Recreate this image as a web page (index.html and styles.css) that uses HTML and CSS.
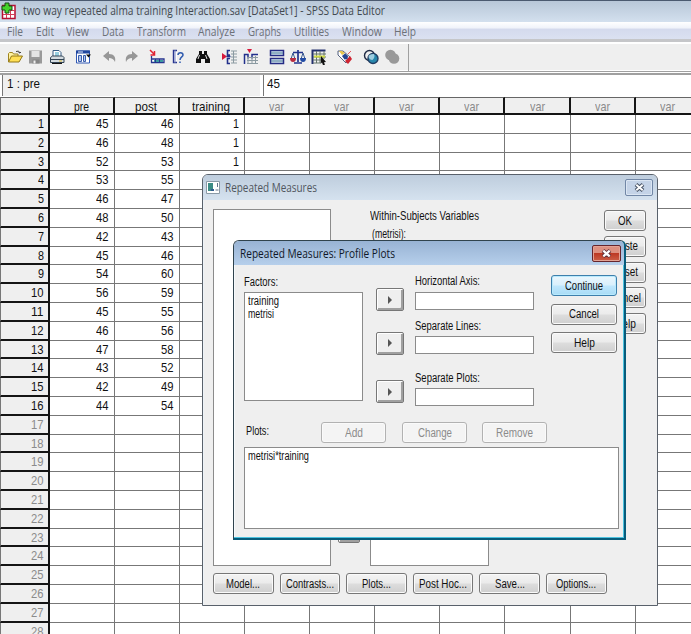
FILE: index.html
```html
<!DOCTYPE html>
<html lang="en">
<head>
<meta charset="utf-8">
<title>SPSS Data Editor</title>
<link rel="stylesheet" href="styles.css">
</head>
<body>
<main class="app">
  <header class="titlebar">
    <svg class="app-icon" width="18" height="18" viewBox="0 0 18 18"><path d="M2.500 3.500h12.500v13h-12.500z" fill="#fff" stroke="#b60f32" stroke-width="1.500"/><path d="M3 12.500h12M6.500 9v7M10.500 4v12M10 8.500h5" stroke="#d33c58" stroke-width="1"/><path d="M5 1h4v3h3v4h-3v3h-4v-3h-3v-4h3z" fill="#45d32b" stroke="#174a16"/></svg>
    <span class="fit" data-w="362">two way repeated alma training Interaction.sav [DataSet1] - SPSS Data Editor</span>
  </header>
  <nav class="menu">
    <span class="fit" data-w="16">File</span><span class="fit" data-w="18">Edit</span><span class="fit" data-w="23">View</span><span class="fit" data-w="22">Data</span><span class="fit" data-w="49">Transform</span><span class="fit" data-w="37">Analyze</span><span class="fit" data-w="33">Graphs</span><span class="fit" data-w="35">Utilities</span><span class="fit" data-w="40">Window</span><span class="fit" data-w="22">Help</span>
  </nav>
  <div class="toolbar">
    <div class="tools">
      <div class="group">
        <svg viewBox="0 0 16 16"><path d="M1.500 13V4.500l1-1h3l1 1.500h4.500v2" fill="#fff2a0" stroke="#a08420"/><path d="M1.500 13l3-6h11l-3.500 6z" fill="#ffdf55" stroke="#927716"/><path d="M9 2.500q3-1.500 4 1.500l1-1m-1 1l-1.500-.5" fill="none" stroke="#444"/></svg>
        <svg viewBox="0 0 16 16"><path d="M1 1.500h13v13h-13z" fill="#999"/><path d="M3.500 2h8v6h-8z" fill="#e4e4e4"/><path d="M4.500 10.500h7v4h-7z" fill="#858585"/><path d="M5.500 11.500h2v3h-2z" fill="#eee"/></svg>
        <svg viewBox="0 0 16 16"><path d="M4 8V1.500h6l2 2V8" fill="#fff" stroke="#345b83"/><path d="M6 4h4M6 6h4" stroke="#31a0c4"/><path d="M1.500 8.500l2-1.500h10l1.500 1.500v5h-13.500z" fill="#d4dbe0" stroke="#345"/><path d="M2 10.500h13" stroke="#345"/><path d="M10 12h3" stroke="#d3b330"/><path d="M3 14.500h10" stroke="#111"/></svg>
      </div>
      <div class="group g-dialog">
        <svg viewBox="0 0 16 16"><path d="M1.500 2h13v12h-13z" fill="#fff" stroke="#3158b4"/><path d="M1 1.500h14v3h-14z" fill="#21479e"/><path d="M3 3h5" stroke="#e6edfc"/><path d="M3.500 6.500h3v6h-3zM8.500 6.500h2v6h-2z" fill="#b9caf0" stroke="#395dab"/><path d="M11 5.500h5l-2.500 3z" fill="#111"/></svg>
      </div>
      <div class="group g-undo">
        <svg viewBox="0 0 16 16"><path d="M1 7l6-5v3c5 0 7 3 6 8c-1.500-3-3-4-6-4v3z" fill="#979797"/></svg>
        <svg viewBox="0 0 16 16"><path d="M14 7l-6-5v3c-5 0-7 3-6 8c1.500-3 3-4 6-4v3z" fill="#979797"/></svg>
      </div>
      <div class="group g-goto">
        <svg viewBox="0 0 16 16"><path d="M1 1l4.500 4.500M5.500 2v4h-4" fill="none" stroke="#e02232" stroke-width="1.500"/><path d="M2.500 7v6.500h12.500v-3.500h-12.500" fill="#fff" stroke="#26358f" stroke-width="1.300"/><path d="M5 12h9" stroke="#3c9ba1" stroke-width="2"/><path d="M6.500 10v3.500M10.500 10v3.500" stroke="#26358f"/></svg>
        <svg viewBox="0 0 16 16"><path d="M6 1.500h-3.500v12h3.500" fill="#fff" stroke="#27358f" stroke-width="1.400"/><path d="M4 1v13" stroke="#7783bd"/><path d="M7 6c0-3 5-3 5 0c0 2-3 2-3 5M9 12.500v1.500" fill="none" stroke="#315caf" stroke-width="1.500"/></svg>
      </div>
      <div class="group g-find">
        <svg viewBox="0 0 16 16"><path d="M4 2h3v3h2v-3h3v3l3 5v4h-5v-4h-4v4h-5v-4l3-5z" fill="#111"/><path d="M4.500 6L3 10M10.500 6l1.500 4" stroke="#ddd"/></svg>
      </div>
      <div class="group g-insert">
        <svg viewBox="0 0 16 16"><path d="M0 4l5 3.500-5 3.500z" fill="#d7193d"/><path d="M8 1.500h-2.500v4.500h2.500M8 9.500h-2.500v5h2.500M4.500 7.500h4" fill="none" stroke="#22308c" stroke-width="1.600"/><path d="M9 2h6M9 5h6M9 8h6M9 11h6M9 14h6M11.500 2v12" stroke="#8b9aa1"/></svg>
        <svg viewBox="0 0 16 16"><path d="M4 0h5l-2.500 4z" fill="#d7193d"/><path d="M1.500 15V5.500h3.500v4M15 5.500h-6v4" fill="none" stroke="#22308c" stroke-width="1.500"/><path d="M4 8.500h11M4 11.500h11M4 14.500h11M5 8v7M9 8v7M12.500 7v8" stroke="#8b9aa1"/></svg>
      </div>
      <div class="group g-data">
        <svg viewBox="0 0 16 16"><path d="M1.500 1.500h13v5h-13zM1.500 9.500h13v5h-13z" fill="#d6edf2" stroke="#252b85" stroke-width="1.500"/><path d="M2 4h12M2 12h12" stroke="#4b7196"/></svg>
        <svg viewBox="0 0 16 16"><path d="M8 1v12M3 3.500h10M4 14h8" stroke="#23348d" stroke-width="1.700"/><path d="M3 4l-2 6M3 4l2 6M13 4l-2 6M13 4l2 6" stroke="#3b5b91"/><path d="M0 9h6q0 4-3 4t-3-4z" fill="#b92c40"/><path d="M10 9h6q0 4-3 4t-3-4z" fill="#214ba4"/></svg>
        <svg viewBox="0 0 16 16"><path d="M1.500 15V1.500h13" fill="none" stroke="#24306e" stroke-width="2"/><path d="M2 5h13M2 8h13M2 11h10M2 14h8M5.500 2v12M9 2v12M13 2v8" stroke="#65756b"/><path d="M3 7.500h11" stroke="#d0db43" stroke-width="2"/><path d="M10 7l5 6-2 .2 1 2.500-2 .5-1-2.800-1.200 1z" fill="#111"/></svg>
      </div>
      <div class="group g-label">
        <svg viewBox="0 0 16 16"><path d="M1 2h5l7 6-4 6-8-8z" fill="#fff" stroke="#54617f"/><path d="M2 2h3l3 2-3 2z" fill="#eac74a"/><path d="M8 12l5-5 2 3-4 5z" fill="#cf2531"/><path d="M5 7l3-2.500 3 2.500-.5 3-3 .5z" fill="#254690"/><path d="M11 5l3-3" stroke="#e15a62"/></svg>
      </div>
      <div class="group g-sets">
        <svg viewBox="0 0 16 16"><circle cx="6.500" cy="6.500" r="5" fill="#eee" stroke="#202b45" stroke-width="1.400"/><circle cx="10" cy="9.500" r="5" fill="#2887ac" stroke="#203c62" stroke-width="1.400"/><path d="M5.500 8q0-3 5.500-3q1.500 3-1.500 6q-3 0-4-3z" fill="#9dcde0"/></svg>
        <svg viewBox="0 0 16 16"><circle cx="6.500" cy="6" r="5.300" fill="#999"/><circle cx="10" cy="9.500" r="5.300" fill="#999"/></svg>
      </div>
    </div>
  </div>
  <div class="cellbar">
    <div class="cellname"><span class="fit" data-w="33">1 : pre</span></div>
    <div class="cellvalue"><span class="fit" data-w="13">45</span></div>
  </div>
  <div class="sheet" id="sheet"></div>
</main>

<section class="dialog outer">
  <header class="caption">
    <svg width="14" height="13" viewBox="0 0 14 13"><path d="M.5.500h13v12h-13z" fill="#fff" stroke="#8a9aa7"/><path d="M2 2h5v8h-5z" fill="#3c8c85"/><path d="M5 8h3v2h-3z" fill="#315c91"/><path d="M11.500 2v4M9.500 9h3" stroke="#62748b"/></svg>
    <span class="fit" data-w="92">Repeated Measures</span>
    <span class="close"><svg width="11" height="9" viewBox="0 0 11 9"><path d="M2 1.500l7 6M9 1.500l-7 6" stroke="#4a5668" stroke-width="4"/><path d="M2.300 1.700l6.400 5.600M8.700 1.700l-6.400 5.600" stroke="#fff" stroke-width="1.800"/></svg></span>
  </header>
  <div class="outer-body">
    <div class="list"></div>
    <div class="mover"><span class="arrow"></span></div>
    <div class="within">
      <span class="fit" data-w="109">Within-Subjects Variables</span>
      <span class="fit second" data-w="34">(metrisi):</span>
      <div class="list"></div>
    </div>
    <div class="side">
      <span class="btn"><span class="fit" data-w="14">OK</span></span>
      <span class="btn"><span class="fit" data-w="25">Paste</span></span>
      <span class="btn"><span class="fit" data-w="26">Reset</span></span>
      <span class="btn"><span class="fit" data-w="31">Cancel</span></span>
      <span class="btn"><span class="fit" data-w="21">Help</span></span>
    </div>
  </div>
  <div class="options">
    <span class="btn"><span class="fit" data-w="34">Model...</span></span>
    <span class="btn"><span class="fit" data-w="48">Contrasts...</span></span>
    <span class="btn"><span class="fit" data-w="29">Plots...</span></span>
    <span class="btn"><span class="fit" data-w="48">Post Hoc...</span></span>
    <span class="btn"><span class="fit" data-w="30">Save...</span></span>
    <span class="btn"><span class="fit" data-w="40">Options...</span></span>
  </div>
</section>

<section class="dialog inner">
  <header class="caption">
    <span class="fit" data-w="155">Repeated Measures: Profile Plots</span>
    <span class="close"><svg width="11" height="9" viewBox="0 0 11 9"><path d="M2 1.500l7 6M9 1.500l-7 6" stroke="#60313a" stroke-width="4"/><path d="M2.300 1.700l6.400 5.600M8.700 1.700l-6.400 5.600" stroke="#fff" stroke-width="2.200"/></svg></span>
  </header>
  <div class="inner-body">
    <div class="factors">
      <span class="fit" data-w="34">Factors:</span>
      <div class="list"><span class="fit" data-w="31">training</span><span class="fit" data-w="26">metrisi</span></div>
    </div>
    <div class="arrows"><span class="arrow"></span><span class="arrow"></span><span class="arrow"></span></div>
    <div class="axes">
      <span class="fit" data-w="65">Horizontal Axis:</span><div class="field"></div>
      <span class="fit" data-w="66">Separate Lines:</span><div class="field"></div>
      <span class="fit" data-w="65">Separate Plots:</span><div class="field"></div>
    </div>
    <div class="side">
      <span class="btn primary"><span class="fit" data-w="38">Continue</span></span>
      <span class="btn"><span class="fit" data-w="30">Cancel</span></span>
      <span class="btn"><span class="fit" data-w="21">Help</span></span>
    </div>
  </div>
  <div class="plots">
    <span class="fit" data-w="23">Plots:</span>
    <span class="btn off"><span class="fit" data-w="18">Add</span></span>
    <span class="btn off"><span class="fit" data-w="34">Change</span></span>
    <span class="btn off"><span class="fit" data-w="37">Remove</span></span>
  </div>
  <div class="list plotlist"><span class="fit" data-w="61">metrisi*training</span></div>
</section>
<script src="app.js"></script>
</body>
</html>
```

FILE: styles.css
```css
* { box-sizing: border-box; }
body { margin: 0; width: 691px; height: 634px; overflow: hidden; position: relative; background: #fff; font: 12.500px/14px "Liberation Sans", Arial, sans-serif; color: #111; }
.fit { display: inline-block; flex: none; white-space: nowrap; transform-origin: 0 50%; }
.app { display: flex; flex-direction: column; width: 691px; height: 634px; overflow: hidden; }

.titlebar { height: 22px; flex: none; display: flex; align-items: center; gap: 5px; border-top: 1px solid #4b5a70; background: linear-gradient(#b8c7d8, #d3e0ee); font: 12px/16px "Open Sans", sans-serif; color: #43494f; }
.titlebar .fit { margin-top: -2px; }
.app-icon { flex: none; margin-top: -2px; }
.menu { height: 17px; flex: none; display: flex; align-items: center; gap: 12.700px; padding: 3px 0 0 7px; background: linear-gradient(#fff 0, #f0f3fa 35%, #d4daed 42%, #dbe1f1 100%); font: 12px/16px "Open Sans", sans-serif; color: #6d7178; }
.toolbar { height: 33px; flex: none; padding-top: 5px; border-bottom: 1px solid #a0a0a0; background: linear-gradient(#c5c6c9 0 3px, #fff 3px 5px, #efefef 5px 31px, #fff 31px); }
.tools { width: 409px; height: 27px; border-right: 1px solid #a0a0a0; display: flex; align-items: center; padding: 0 0 1px 7px; }
.tools svg { width: 16px; height: 16px; display: block; }
.group { display: flex; gap: 5px; }
.g-dialog { margin-left: 10px; }
.g-undo { margin-left: 11px; gap: 6px; }
.g-goto { margin-left: 9px; gap: 6px; }
.g-find { margin-left: 8px; }
.g-insert { margin-left: 11px; }
.g-data { margin-left: 10px; }
.g-label { margin-left: 10px; }
.g-sets { margin-left: 10px; }
.cellbar { height: 25px; flex: none; display: flex; gap: 3px; padding: 2px 0 1px 2px; background: #fff; box-shadow: inset 0 1px #fff, inset 0 3px #a0a0a0; font-size: 13px; line-height: 17px; }
.cellname { width: 258px; margin-top: 1px; border-left: 1px solid #777; background: #f0f0f0; padding-left: 4px; }
.cellvalue { flex: 1; margin-top: 1px; border-left: 1px solid #777; background: #fff; padding-left: 3px; }

.sheet { display: grid; grid-template-columns: 49.500px repeat(10, 65.150px); grid-template-rows: 18px; grid-auto-rows: 18.810px; width: 701px; font-size: 13.500px; line-height: 17px; }
.cell { border-right: 1px solid #777; border-bottom: 1px solid #777; text-align: right; padding-right: 5px; }
.corner, .colhead, .rowhead { background: #efefef; border-right: 2px solid #151515; border-bottom: 2px solid #151515; }
.corner, .colhead { border-top: 1px solid #666; text-align: center; }
.rowhead { text-align: right; padding: 0 4px 0 0; border-left: 1px solid #777; }
.corner { border-left: 1px solid #777; }
.faint { color: #8b8b8b; }

.dialog { position: absolute; display: flex; flex-direction: column; background: #efefef; overflow: hidden; }
.outer { left: 202px; top: 174px; width: 456px; height: 432px; border: 1px solid #59616b; border-radius: 6px 6px 0 0; box-shadow: inset 1px 1px #edf3f8; }
.inner { left: 233px; top: 240px; width: 393px; height: 300px; border: 1px solid #30434d; border-width: 1px 2px 2px 1px; border-right-color: #075c7b; border-bottom-color: #075c7b; border-radius: 6px 6px 0 0; box-shadow: inset -1px -1px #4cc2df, inset 1px 0 #f5f9fc; }
.caption { flex: none; height: 25px; display: flex; align-items: center; gap: 5px; padding: 0 4px 0 3px; background: linear-gradient(#becddd, #d5e2ef); font: 12px/16px "Open Sans", sans-serif; color: #50565d; }
.inner .caption { height: 24px; padding: 1px 3px 0 6px; background: linear-gradient(#98b3d4, #b6cfeb); color: #101828; }
.close { margin-left: auto; width: 28px; height: 17px; border: 1px solid #7187a6; border-radius: 2px; display: flex; align-items: center; justify-content: center; background: #c4d3e7; box-shadow: inset 0 0 0 1px #dbe6f3; }
.inner .close { width: 29px; border-color: #66252c; background: linear-gradient(#dd9080 0 45%, #bd3924 50%, #cc5f47); box-shadow: inset 0 0 0 1px #e3a294; }
.list, .field { background: #fff; border: 1px solid #8b8b8b; }
.btn { height: 21px; border: 1px solid #777; border-radius: 3px; display: flex; align-items: center; justify-content: center; background: linear-gradient(#f3f3f3 0, #ebebeb 48%, #dddddd 52%, #cfcfcf); box-shadow: inset 0 0 0 1px #fafafa; }
.primary { border-color: #3d7fac; background: linear-gradient(#eaf6fd, #d9f0fc 48%, #bfe7fd 52%, #a8dcf6); box-shadow: inset 0 0 0 1px #b8eafd; }
.off { color: #8b8b8b; border-color: #b2b2b2; background: #f4f4f4; }
.arrow { display: flex; align-items: center; justify-content: center; width: 28px; height: 23px; background: #efefef; border: 1px solid #777; border-radius: 2px; box-shadow: inset 1px 1px #fff, inset -2px -2px #a0a0a0; }
.arrow::before { content: ""; border: 4px solid transparent; border-left: 4px solid #555; border-right: 0; }

.outer-body { display: grid; grid-template-columns: 118px 29px 119px 1fr; height: 357px; margin: 9px 11px 0 10px; flex: none; }
.mover { display: flex; align-items: flex-end; padding: 0 0 23px 7px; }
.within { display: flex; flex-direction: column; align-items: flex-start; margin-left: 10px; width: 119px; }
.second { margin: 4px 0 0 2px; }
.within .list { width: 119px; flex: 1; margin-top: 6px; }
.outer .side { justify-self: end; width: 42px; padding-top: 1px; display: flex; flex-direction: column; gap: 4.800px; }
.options { display: flex; gap: 6px; padding: 7px 0 0 10px; }
.options .btn { width: 60.600px; flex: none; }

.inner-body { display: grid; grid-template-columns: 119px 28px 119px 66px; column-gap: 12px; height: 136px; margin: 9px 0 0 10px; flex: none; }
.factors { display: flex; flex-direction: column; align-items: flex-start; }
.factors > .fit { margin-top: 1px; }
.factors .list { margin-top: 3px; width: 119px; height: 109px; padding: 2px 0 0 3px; display: flex; flex-direction: column; align-items: flex-start; line-height: 13px; }
.arrows { display: grid; grid-template-rows: 43.500px 48.500px 23px; padding: 14px 0 0 1px; }
.axes { display: grid; grid-template-rows: 18px 26.500px 17px 35px 17px 18px; }
.axes .fit { align-self: start; justify-self: start; }
.axes .field { height: 18px; }
.inner .side { display: flex; flex-direction: column; gap: 7.700px; padding: 1px 0 0 5px; width: 71px; }
.inner .side .btn { width: 66px; }
.plots { display: grid; grid-template-columns: 75px 65px 65px 65px; align-items: center; justify-items: start; padding-left: 12px; margin-top: 12px; height: 21px; flex: none; }
.plots .btn { width: 65px; }
.plots .btn:nth-child(3) { margin-left: 16px; }
.plots .btn:nth-child(4) { margin-left: 31px; }
.plots > .fit { position: relative; top: -2px; }
.plotlist { width: 375px; height: 82px; margin: 4px 0 0 10px; padding: 1px 0 0 3px; flex: none; }
```

FILE: app.js
```js
const rows = [
  [45, 46], [46, 48], [52, 53], [53, 55], [46, 47], [48, 50], [42, 43], [45, 46],
  [54, 60], [56, 59], [45, 55], [46, 56], [47, 58], [43, 52], [42, 49], [44, 54]
];
const sheet = document.getElementById("sheet");

function add(className, text, width) {
  const cell = document.createElement("div");
  cell.className = className;
  if (text !== "") {
    const label = document.createElement("span");
    label.className = "fit";
    label.dataset.w = width;
    label.textContent = text;
    cell.append(label);
  }
  sheet.append(cell);
}

add("corner", "", 0);
[["pre", 15], ["post", 22], ["training", 38]].forEach(([name, w]) => add("colhead", name, w));
for (let c = 0; c < 7; c++) add("colhead faint", "var", 15);
for (let r = 1; r <= 28; r++) {
  const data = rows[r - 1];
  add(data ? "rowhead" : "rowhead faint", String(r), r < 10 ? 6 : 12.5);
  for (let c = 0; c < 10; c++) {
    const value = !data ? "" : c < 2 ? data[c] : c === 2 && r < 4 ? 1 : "";
    add("cell", value, c < 2 ? 12.5 : 6);
  }
}

// Condense each label to its nominal width, keeping its layout box in step.
document.querySelectorAll(".fit").forEach((label) => {
  const natural = label.getBoundingClientRect().width;
  const width = Number(label.dataset.w);
  label.style.transform = `scaleX(${width / natural})`;
  label.style.marginRight = `${width - natural}px`;
});
```
